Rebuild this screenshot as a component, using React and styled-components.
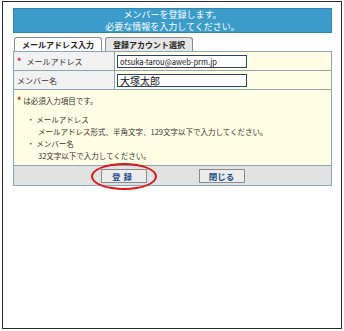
import React from 'react';
import styled, { createGlobalStyle } from 'styled-components';

const Global = createGlobalStyle`
  html, body { margin: 0; padding: 0; background: #ffffff; }
  body { font-family: "Noto Sans CJK JP", "Noto Sans", sans-serif; }
`

const Frame = styled.div`
  box-sizing: border-box;
  width: 340px;
  height: 328px;
  margin: 1px 0 0 2px;
  border: 1px solid #2a2a2a;
  padding: 6px 9px 0 10px;
`
const Header = styled.div`
  background: #3b9ccb;
  border: 1px solid #2f86b3;
  color: #ffffff;
  text-align: center;
  font-size: 9px;
  height: 25px;
  box-sizing: border-box;
`
const HeaderLine = styled.div`
  line-height: 11.5px;
  height: 11.5px;
`
const Tabs = styled.div`
  display: flex;
  gap: 3px;
  margin-top: 4px;
  padding-left: 1px;
  border-bottom: 1px solid #8aa4b8;
`
const Tab = styled.div`
  font-size: 8px;
  font-weight: bold;
  color: #222;
  height: 13px;
  line-height: 13px;
  padding: 0 7px;
  border: 1px solid #8a8a8a;
  border-bottom: none;
  border-radius: 3px 3px 0 0;
  background: ${p => (p.$active ? '#ffffff' : '#e6e6e6')};
  margin-bottom: ${p => (p.$active ? '-1px' : '0')};
`
const Table = styled.div`
  border-left: 1px solid #8aa4b8;
  border-right: 1px solid #8aa4b8;
`
const Row = styled.div`
  display: grid;
  grid-template-columns: 101px 1fr;
  height: 18px;
  border-bottom: 1px solid #8aa4b8;
`
const Label = styled.div`
  background: #f1f1f1;
  border-right: 1px solid #8aa4b8;
  font-size: 8px;
  color: #333;
  display: flex;
  align-items: center;
  padding-left: 3px;
  gap: 5px;
`
const Mark = styled.span`
  color: #e01010;
  font-weight: bold;
  font-size: 9px;
`
const Value = styled.div`
  background: #fffde3;
  display: flex;
  align-items: center;
  padding-left: 2px;
`
const Input = styled.div`
  width: 130px;
  height: 13px;
  box-sizing: border-box;
  border: 1px solid #23456e;
  background: #fff;
  color: #111;
  font-size: ${p => (p.$big ? '10px' : '7.5px')};
  line-height: 11px;
  padding-left: 2px;
`
const Notes = styled.div`
  background: #fffde3;
  border: 1px solid #8aa4b8;
  border-top: none;
  padding: 5px 3px 3px;
  font-size: 7.5px;
  color: #333;
  line-height: 12px;
`
const NoteLine = styled.div`
  padding-left: ${p => p.$indent || 0}px;
  margin-top: ${p => p.$gap || 0}px;
`
const ButtonBar = styled.div`
  display: flex;
  justify-content: center;
  gap: 52px;
  background: #e2e2e2;
  border: 1px solid #8aa4b8;
  border-top: none;
  height: 19px;
  align-items: center;
`
const ButtonWrap = styled.div`
  position: relative;
`
const Button = styled.div`
  width: 46px;
  height: 14px;
  box-sizing: border-box;
  border: 1px solid #8a8a8a;
  background: #ececec;
  color: #1a4f8a;
  font-weight: bold;
  font-size: 8.5px;
  line-height: 12px;
  text-align: center;
  letter-spacing: ${p => p.$wide ? '3px' : '0'};
`
const Circle = styled.div`
  position: absolute;
  left: -10px;
  top: -6px;
  width: 66px;
  height: 27px;
  border: 2px solid #e01515;
  border-radius: 50%;
  box-sizing: border-box;
  pointer-events: none;
`

export default function App() {
  return (
    <>
      <Global />
      <Frame>
        <Header>
          <HeaderLine>メンバーを登録します。</HeaderLine>
          <HeaderLine>必要な情報を入力してください。</HeaderLine>
        </Header>
        <Tabs>
          <Tab $active>メールアドレス入力</Tab>
          <Tab>登録アカウント選択</Tab>
        </Tabs>
        <Table>
          <Row>
            <Label><Mark>*</Mark>メールアドレス</Label>
            <Value><Input>otsuka-tarou@aweb-prm.jp</Input></Value>
          </Row>
          <Row>
            <Label>メンバー名</Label>
            <Value><Input $big>大塚太郎</Input></Value>
          </Row>
        </Table>
        <Notes>
          <NoteLine><Mark>*</Mark> は必須入力項目です。</NoteLine>
          <NoteLine $indent={10} $gap={7}>・ メールアドレス</NoteLine>
          <NoteLine $indent={21}>メールアドレス形式、半角文字、129文字以下で入力してください。</NoteLine>
          <NoteLine $indent={10}>・ メンバー名</NoteLine>
          <NoteLine $indent={21}>32文字以下で入力してください。</NoteLine>
        </Notes>
        <ButtonBar>
          <ButtonWrap>
            <Button $wide>登録</Button>
            <Circle />
          </ButtonWrap>
          <Button>閉じる</Button>
        </ButtonBar>
      </Frame>
    </>
  );
}
